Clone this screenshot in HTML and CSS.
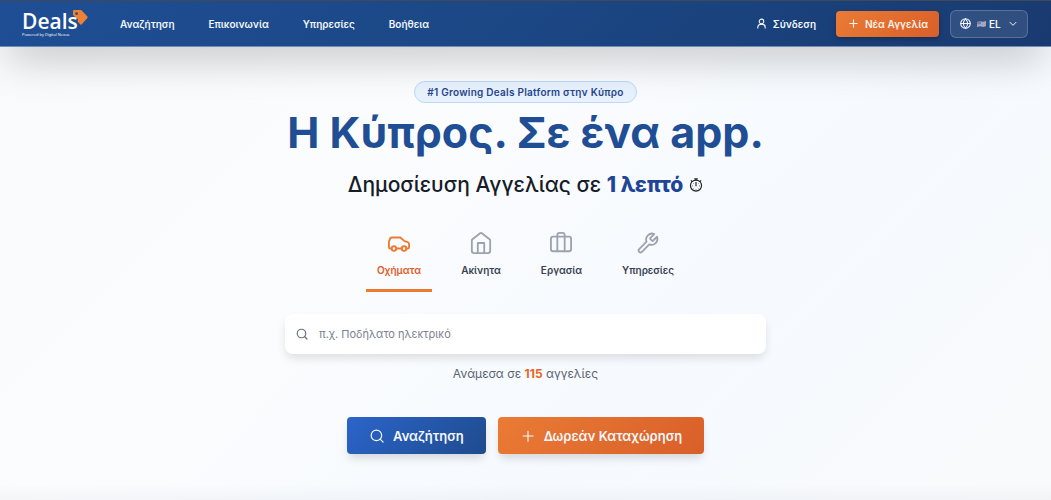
FILE: index.html
```
<!DOCTYPE html>
<html lang="el">
<head>
  <meta charset="UTF-8">
  <meta name="viewport" content="width=device-width, initial-scale=1.0">
  <title>Deals</title>
  <link rel="stylesheet" href="styles.css">
</head>
<body>
  <header class="header">
    <a class="logo" href="#">
      <svg class="logo-tag" viewBox="0 0 15 15" aria-hidden="true">
        <path fill="#ee8133" fill-rule="evenodd" d="M1 0H8.200L14.400 6.600Q15 7.300 14.400 8L8.600 14.400Q8 15 7.400 14.400L4.500 11.500L5 9L1.600 6.600L0 5V1Q0 0 1 0ZM3.600 2.200A1.400 1.400 0 1 0 3.600 5A1.400 1.400 0 1 0 3.600 2.200Z"/>
      </svg>
      <span class="logo-name">Deals</span>
      <span class="logo-sub">Powered by Digital Nexus</span>
    </a>

    <nav class="nav">
      <a href="#">Αναζήτηση</a>
      <a href="#">Επικοινωνία</a>
      <a href="#">Υπηρεσίες</a>
      <a href="#">Βοήθεια</a>
    </nav>

    <div class="actions">
      <a class="login" href="#">
        <svg class="icon icon-sm" viewBox="0 0 24 24"><circle cx="12" cy="7.500" r="5"/><path d="M4 22v-2a6 6 0 0 1 6-6h4a6 6 0 0 1 6 6v2"/></svg>
        Σύνδεση
      </a>
      <button class="btn-new" type="button">
        <svg class="icon icon-sm" viewBox="0 0 24 24"><path d="M4 12h16M12 4v16"/></svg>
        Νέα Αγγελία
      </button>
      <div class="lang">
        <svg class="icon icon-sm" viewBox="0 0 24 24"><circle cx="12" cy="12" r="10.500"/><path d="M2 12h20M12 2c-6 6-6 14 0 20c6-6 6-14 0-20"/></svg>
        <svg class="flag" viewBox="0 0 9 6" aria-hidden="true">
          <path fill="#b9b5cb" d="M0 1Q2 0 4.500 .6T9 0V5Q7 6 4.500 5.400T0 6Z"/>
          <path fill="#6f7fab" d="M0 1Q2 0 4 .5V3Q2 3 0 3.500Z"/>
          <path stroke="#85809f" stroke-width=".6" fill="none" d="M4 2H9M0 4.400Q2 3.600 4.500 3.900T9 3.600"/>
        </svg>
        <select aria-label="Γλώσσα">
          <option>EL</option>
          <option>EN</option>
        </select>
        <svg class="icon icon-xs chevron" viewBox="0 0 24 24"><path d="M3 7l9 9l9-9"/></svg>
      </div>
    </div>
  </header>

  <main class="hero">
    <p class="badge">#1 Growing Deals Platform στην Κύπρο</p>
    <h1>Η Κύπρος. Σε ένα app.</h1>
    <h2>
      <span>Δημοσίευση Αγγελίας σε <strong>1 λεπτό</strong></span>
      <svg class="timer" viewBox="0 0 24 24" aria-hidden="true"><circle cx="12" cy="13" r="9.500"/><path d="M12 4.500V2M9 1.500h6M19 6l1.800-1.800M5 6L3.200 4.200M12 7v7"/><path class="ticks" d="M12 19v2M5 13.500h2M17 13.500h2M7.500 9l1 1M16.500 9l-1 1M7.500 18l1-1M16.500 18l-1-1"/></svg>
    </h2>

    <!-- Categories -->
    <div class="tabs">
      <button class="tab active" type="button">
        <svg class="icon icon-lg" viewBox="0 0 24 24"><path d="M4 18H2.500Q1 18 1 16.500V11L2.200 7.200Q2.600 6 4 6H13.500L18 10L21 10.800Q23 11.400 23 13.400V16.500Q23 18 21.500 18H20M9 18h6"/><circle cx="6.500" cy="18" r="2.500"/><circle cx="17.500" cy="18" r="2.500"/></svg>
        Οχήματα
      </button>
      <button class="tab" type="button">
        <svg class="icon icon-lg" viewBox="0 0 24 24"><path d="M2 9.200Q2 8.400 2.700 7.900L11 1.400Q12 .7 13 1.400L21.300 7.900Q22 8.400 22 9.200V20.500Q22 23 19.500 23H4.500Q2 23 2 20.500ZM8.500 23V12H15.500V23"/></svg>
        Ακίνητα
      </button>
      <button class="tab" type="button">
        <svg class="icon icon-lg" viewBox="0 0 24 24"><rect x="1" y="5" width="22" height="16" rx="2.500"/><path d="M8 21V3.500Q8 1 10.500 1H13.500Q16 1 16 3.500V21"/></svg>
        Εργασία
      </button>
      <button class="tab" type="button">
        <svg class="icon icon-lg" viewBox="0 0 24 24"><path d="M14.700 6.300a1 1 0 0 0 0 1.400l1.600 1.600a1 1 0 0 0 1.400 0l4.100-4.100a6.500 6.500 0 0 1-8.400 8.400L5.400 21.600a2.100 2.100 0 0 1-3-3l8-8a6.500 6.500 0 0 1 8.400-8.400Z"/></svg>
        Υπηρεσίες
      </button>
    </div>

    <!-- Search box -->
    <div class="search">
      <svg class="icon icon-md" viewBox="0 0 24 24"><circle cx="11" cy="11" r="8.500"/><path d="M22 22l-5-5"/></svg>
      <input type="text" aria-label="Αναζήτηση αγγελιών" placeholder="π.χ. Ποδήλατο ηλεκτρικό">
    </div>
    <p class="count">Ανάμεσα σε <strong>115</strong> αγγελίες</p>

    <div class="cta">
      <button class="btn btn-blue" type="button">
        <svg class="icon icon-cta" viewBox="0 0 24 24"><circle cx="11" cy="11" r="9"/><path d="M22.500 22.500L17.400 17.400"/></svg>
        Αναζήτηση
      </button>
      <button class="btn btn-orange" type="button">
        <svg class="icon icon-cta" viewBox="0 0 24 24"><path d="M4 12h17M12 4v17"/></svg>
        Δωρεάν Καταχώρηση
      </button>
    </div>
  </main>
</body>
</html>
```
FILE: styles.css
```
* {
  box-sizing: border-box;
}

body {
  margin: 0;
  min-height: 100vh;
  font-family: Inter, "Open Sans", sans-serif;
  color: #374151;
  background:
    linear-gradient(to top, rgba(30, 41, 59, 0.03), transparent 16px),
    linear-gradient(135deg, #f9fafb 0%, #fbfcfe 35%, #f6fafe 65%, #f9fafc 100%);
}

button,
input,
select {
  font-family: inherit;
}

button {
  border: none;
  cursor: pointer;
}

a {
  color: inherit;
  text-decoration: none;
}

/* Icons */
.icon {
  flex: none;
  fill: none;
  stroke: currentColor;
  stroke-width: 2;
  stroke-linecap: round;
  stroke-linejoin: round;
}
.icon-xs { width: 8px; height: 8px; stroke-width: 3; }
.icon-sm { width: 11px; height: 11px; stroke-width: 2.4; }
.icon-md { width: 12px; height: 12px; stroke-width: 2.4; }
.icon-cta { width: 14px; height: 14px; }
.icon-lg { width: 22px; height: 22px; }

/* Header */
.header {
  position: relative;
  display: flex;
  align-items: center;
  height: 47px;
  padding: 0 23px 0 22px;
  color: #f1f5fb;
  background: linear-gradient(135deg, #1f4e95, #1b4784 50%, #193a70);
  border-top: 1px solid #414858;
  border-bottom: 1px solid #6f8bb8;
  box-shadow: 0 18px 42px -8px rgba(0, 0, 0, 0.25);
}

.logo {
  position: relative;
  display: flex;
  flex-direction: column;
  width: 66px;
  color: #fff;
}
.logo-name {
  position: relative;
  font-family: "Open Sans", sans-serif;
  font-size: 21px;
  font-weight: 600;
  line-height: 22px;
}
.logo-sub {
  font-family: "Open Sans", sans-serif;
  font-size: 4px;
  line-height: 5px;
  white-space: nowrap;
}
.logo-tag {
  position: absolute;
  top: 0;
  right: 0;
  width: 15px;
  height: 15px;
}

.nav {
  display: flex;
  gap: 34px;
  margin-left: 32px;
  font-size: 10px;
  font-weight: 600;
}

.actions {
  display: flex;
  align-items: center;
  margin-left: auto;
  font-size: 10px;
  font-weight: 600;
}
.login {
  display: flex;
  align-items: center;
  gap: 6px;
  margin-right: 20px;
}
.btn-new {
  display: flex;
  align-items: center;
  gap: 6px;
  height: 26px;
  padding: 0 11px 0 12px;
  margin-right: 11px;
  font-size: 10px;
  font-weight: 600;
  color: #fff3ea;
  background: linear-gradient(135deg, #ea7b35, #d95f29);
  border-radius: 4px;
  box-shadow: 0 2px 5px rgba(0, 0, 0, 0.25);
}
.lang {
  position: relative;
  display: flex;
  align-items: center;
  height: 28px;
  padding: 0 10px 0 9px;
  background: rgba(255, 255, 255, 0.1);
  border: 1px solid rgba(255, 255, 255, 0.2);
  border-radius: 6px;
}
.flag {
  width: 9px;
  height: 6px;
  margin: 0 3px 0 6px;
}
.lang select {
  appearance: none;
  width: 28px;
  padding: 0;
  font-size: 10px;
  font-weight: 600;
  color: inherit;
  background: none;
  border: none;
}
.chevron {
  position: absolute;
  right: 10px;
  pointer-events: none;
}

/* Hero */
.hero {
  display: flex;
  flex-direction: column;
  align-items: center;
  padding: 34px 16px 40px;
}
.badge {
  margin: 0;
  padding: 0 12px;
  font-size: 10px;
  font-weight: 600;
  line-height: 20px;
  letter-spacing: 0.025em;
  color: #27468f;
  background: #e8f2fe;
  border: 1px solid #bcd9fb;
  border-radius: 11px;
}
h1 {
  margin: 3px 0 0;
  font-size: 43px;
  font-weight: 700;
  line-height: 52px;
  color: #1f4e95;
}
h2 {
  display: flex;
  align-items: center;
  gap: 6px;
  margin: 13px 0 0;
  font-size: 21px;
  font-weight: 500;
  line-height: 28px;
  color: #161c28;
}
h2 strong {
  font-weight: 800;
  color: #1f4599;
}
.timer {
  width: 14px;
  height: 14px;
  fill: none;
  stroke: #20242c;
  stroke-width: 2;
}
.timer .ticks {
  stroke-width: 1;
}

/* Category tabs */
.tabs {
  display: flex;
  gap: 18px;
  margin-top: 25px;
}
.tab {
  display: flex;
  flex-direction: column;
  align-items: center;
  gap: 8px;
  padding: 8px 11px 11px;
  font-size: 10px;
  font-weight: 600;
  line-height: 16px;
  color: #374151;
  background: none;
  border-bottom: 3px solid transparent;
}
.tab .icon {
  color: #9ca3af;
}
.tab.active {
  color: #e25a26;
  border-bottom-color: #ec7a30;
}
.tab.active .icon {
  color: #ec7a30;
}

/* Search */
.search {
  display: flex;
  align-items: center;
  gap: 11px;
  width: 100%;
  max-width: 481px;
  height: 40px;
  margin-top: 22px;
  padding: 0 11px;
  color: #6b7280;
  background: #fff;
  border-radius: 8px;
  box-shadow: 0 5px 10px -1px rgba(0, 0, 0, 0.12);
}
.search input {
  flex: 1;
  min-width: 0;
  padding: 0;
  font-size: 11px;
  color: #374151;
  background: none;
  border: none;
  outline: none;
}
.search input::placeholder {
  color: #7b818e;
  opacity: 1;
}
.count {
  margin: 12px 0 0;
  font-size: 12px;
  line-height: 16px;
  color: #5b6472;
}
.count strong {
  color: #ea6424;
}

/* Call to action buttons */
.cta {
  display: flex;
  gap: 12px;
  margin-top: 35px;
}
.btn {
  display: flex;
  align-items: center;
  gap: 9px;
  height: 37px;
  padding: 0 22px 0 23px;
  font-size: 13px;
  font-weight: 600;
  color: #f4f7fc;
  border-radius: 4px;
  box-shadow: 0 6px 10px -2px rgba(0, 0, 0, 0.15);
}
.btn-blue {
  background: linear-gradient(135deg, #2b65cb, #1f4b8d);
}
.btn-orange {
  background: linear-gradient(135deg, #ea7b35, #d95f29);
}
```
